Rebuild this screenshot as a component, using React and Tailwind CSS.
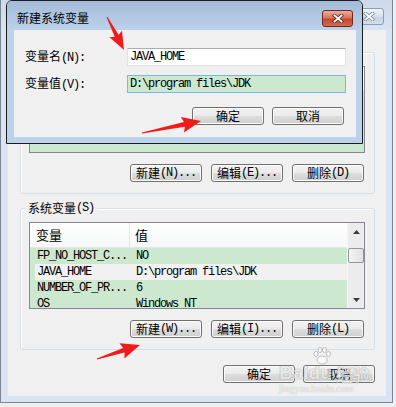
import React from "react";

const cjk = "font-['Noto_Sans_CJK_SC',sans-serif]";
const mono = "font-['Liberation_Mono','Noto_Sans_CJK_SC',monospace] tracking-[-1.2px]";

const sysVars = [
  { name: "FP_NO_HOST_C...", value: "NO" },
  { name: "JAVA_HOME", value: "D:\\program files\\JDK", selected: true },
  { name: "NUMBER_OF_PR...", value: "6" },
  { name: "OS", value: "Windows_NT" },
];

// rows of the user list sit under the front dialog; only the green shows
const userVars = [
  { name: "", value: "" },
  { name: " ", value: "" },
];

const M = ({ children }) => <span className={mono}>{children}</span>;

function Btn({ children }) {
  return (
    <div
      className={`h-[18px] w-[72px] shrink-0 rounded-[3px] border border-[#707070] bg-[linear-gradient(#f3f3f3_0%,#ebebeb_48%,#dddddd_52%,#cfcfcf_100%)] shadow-[inset_0_0_0_1px_#fbfbfb] flex items-center justify-center text-[12px] leading-none text-black ${cjk}`}
    >
      {children}
    </div>
  );
}

function XGlyph({ outline }) {
  return (
    <svg width="12" height="9" viewBox="0 0 12 9">
      <path d="M2.5 1.5 L9.5 7.5 M9.5 1.5 L2.5 7.5" stroke={outline} strokeWidth="3.6" strokeLinecap="square" />
      <path d="M2.5 1.5 L9.5 7.5 M9.5 1.5 L2.5 7.5" stroke="#ffffff" strokeWidth="1.9" strokeLinecap="square" />
    </svg>
  );
}

// red annotation arrow: thin tail widening toward a triangular head
function arrowPts(tx, ty, px, py, head, hw, sw) {
  const dx = px - tx;
  const dy = py - ty;
  const len = Math.hypot(dx, dy);
  const ux = dx / len;
  const uy = dy / len;
  const nx = -uy;
  const ny = ux;
  const bx = px - ux * head;
  const by = py - uy * head;
  const p = (x, y) => `${x.toFixed(1)},${y.toFixed(1)}`;
  return [
    p(tx + nx * 0.4, ty + ny * 0.4),
    p(bx + nx * sw, by + ny * sw),
    p(bx - ux * 2 + nx * hw, by - uy * 2 + ny * hw),
    p(px, py),
    p(bx - ux * 2 - nx * hw, by - uy * 2 - ny * hw),
    p(bx - nx * sw, by - ny * sw),
    p(tx - nx * 0.4, ty - ny * 0.4),
  ].join(" ");
}

function VarList({ rows, scroll, header }) {
  return (
    <div className="ml-[8px] mt-[7px] flex h-[87px] w-[336px] overflow-hidden border border-[#828790] bg-[#cce8cf]">
      <div className="flex-1 flex flex-col">
        <div className={`flex h-[25px] shrink-0 border-b border-[#e5e5e5] bg-[linear-gradient(#ffffff,#f6f7f8)] text-[13px] text-black ${cjk}`}>
          <div className="w-[100px] border-r border-[#e5e5e5] pl-[6px] flex items-center">{header && "变量"}</div>
          <div className="flex-1 pl-[5px] flex items-center">{header && "值"}</div>
        </div>
        {rows.map((r) => (
          <div
            key={r.name}
            className={`ml-[5px] flex h-[16px] shrink-0 items-center text-[12px] text-black ${r.selected ? "bg-[#f1f1f1]" : ""}`}
          >
            <div className={`w-[95px] pl-[2px] whitespace-nowrap ${mono}`}>{r.name}</div>
            <div className={`pl-[6px] whitespace-nowrap ${mono}`}>{r.value}</div>
          </div>
        ))}
      </div>
      {scroll && (
        <div className="w-[17px] shrink-0 flex flex-col bg-[#ececec] border-l border-[#f7f7f7]">
          <div className="h-[17px] flex items-center justify-center">
            <svg width="7" height="4" viewBox="0 0 7 4">
              <polygon points="3.5,0 7,4 0,4" fill="#3c3c3c" />
            </svg>
          </div>
          <div className="mt-[8px] h-[15px] w-[16px] rounded-[2px] border border-[#979797] bg-[linear-gradient(90deg,#f4f4f4,#e2e2e2)]" />
          <div className="mt-auto h-[17px] flex items-center justify-center">
            <svg width="7" height="4" viewBox="0 0 7 4">
              <polygon points="0,0 7,0 3.5,4" fill="#3c3c3c" />
            </svg>
          </div>
        </div>
      )}
    </div>
  );
}

function Group({ label, rows, scroll, header, buttons, className }) {
  return (
    <div className={`ml-[12px] w-[355px] h-[142px] flex flex-col rounded-[3px] border border-[#d5dfe5] shadow-[inset_1px_1px_0_#ffffff] ${className}`}>
      <div className={`-mt-[8px] ml-[4px] self-start bg-[#f0f0f0] px-[3px] h-[14px] flex items-center text-[12px] leading-none text-black ${cjk}`}>
        {label}
      </div>
      <VarList rows={rows} scroll={scroll} header={header} />
      <div className="mt-[11px] flex justify-end gap-[9px] pr-[10px]">
        {buttons}
      </div>
    </div>
  );
}

export default function App() {
  return (
    <div className="relative w-[396px] h-[407px] overflow-hidden bg-[#efefef]">
      {/* background window (environment variables) */}
      <div className="w-[393px] h-[403px] flex flex-col border-x border-b border-[#7c8695] bg-[#d8e4f2]">
        <div className="h-[30px] shrink-0 flex items-start justify-end bg-[linear-gradient(#cbd9ea,#d8e4f2)] pr-[8px]">
          <div className="mt-[8px] h-[17px] w-[30px] rounded-[3px] border border-[#8d9db3] bg-[linear-gradient(#eef3f9,#d6e0ec_50%,#c6d3e3_52%,#d3deea)] flex items-center justify-center">
            <XGlyph outline="#7b8ba1" />
          </div>
        </div>
        <div className="flex-1 flex flex-col pl-[7px] pr-[6px] pb-[6px]">
          <div className="flex-1 flex flex-col bg-[#f0f0f0]">
            <Group
              className="mt-[22px]"
              label={null}
              rows={userVars}
              buttons={
                <>
                  <Btn>新建<M>(N)...</M></Btn>
                  <Btn>编辑<M>(E)...</M></Btn>
                  <Btn>删除<M>(D)</M></Btn>
                </>
              }
            />
            <Group
              className="mt-[14px]"
              label={<>系统变量<M>(S)</M></>}
              rows={sysVars}
              scroll
              header
              buttons={
                <>
                  <Btn>新建<M>(W)...</M></Btn>
                  <Btn>编辑<M>(I)...</M></Btn>
                  <Btn>删除<M>(L)</M></Btn>
                </>
              }
            />
            <div className="mt-[15px] flex justify-end gap-[8px] pr-[11px]">
              <Btn>确定</Btn>
              <Btn>取消</Btn>
            </div>
          </div>
        </div>
      </div>

      {/* front dialog: 新建系统变量 */}
      <div className="absolute left-[6px] top-0 w-[357px] h-[144px] flex flex-col rounded-t-[6px] border border-[#1c1c1c] bg-[#bcd1ea]">
        <div className="h-[29px] shrink-0 flex items-start justify-between rounded-t-[5px] bg-[linear-gradient(#a3bbd8,#b3c9e3_60%,#bcd1ea)] pl-[10px] pr-[9px]">
          <span className={`mt-[11px] text-[12px] leading-none text-black ${cjk}`}>新建系统变量</span>
          <div className="mt-[9px] h-[17px] w-[31px] rounded-[3px] border border-[#6b2a21] bg-[linear-gradient(#eaae9f,#d9765f_45%,#c7472d_55%,#d56a4e)] flex items-center justify-center">
            <XGlyph outline="#5b2a22" />
          </div>
        </div>
        <div className="flex-1 flex flex-col pl-[7px] pr-[6px] pb-[6px]">
          <div className="flex-1 flex flex-col bg-[#f0f0f0] pl-[11px] pr-[10px]">
            <div className="mt-[18px] flex h-[18px] items-center">
              <div className={`w-[102px] text-[12px] leading-none text-black ${cjk}`}>
                变量名<M>(N):</M>
              </div>
              <div className="h-[18px] w-[219px] border border-[#e2e3ea] border-t-[#abadb3] bg-white pl-[2px] flex items-center">
                <span className={`text-[12px] leading-none text-black ${mono}`}>JAVA_HOME</span>
              </div>
            </div>
            <div className="mt-[9px] flex h-[18px] items-center">
              <div className={`w-[102px] text-[12px] leading-none text-black ${cjk}`}>
                变量值<M>(V):</M>
              </div>
              <div className="h-[18px] w-[219px] border border-[#7eb4ea] bg-[#cce8cf] pl-[2px] flex items-center">
                <span className={`text-[12px] leading-none text-black ${mono}`}>D:\program files\JDK</span>
              </div>
            </div>
            <div className="mt-[14px] flex justify-end gap-[8px] pr-[2px]">
              <Btn>确定</Btn>
              <Btn>取消</Btn>
            </div>
          </div>
        </div>
      </div>

      {/* watermark */}
      <div className="absolute left-[279px] top-[352px] pointer-events-none select-none opacity-75">
        <div className="flex items-end h-[30px] font-['Liberation_Sans',sans-serif] font-bold text-[19px] leading-none text-white/80 [text-shadow:0_0_1px_#8a8a8a,0_0_1px_#8a8a8a]">
          <span>Bai</span>
          <span className="relative">
            <svg className="absolute left-[3px] -top-[16px]" width="20" height="18" viewBox="0 0 20 18">
              <g fill="#ffffff" fillOpacity="0.8" stroke="#9a9a9a" strokeWidth="0.8">
                <ellipse cx="4" cy="7" rx="2" ry="2.6" />
                <ellipse cx="8" cy="3" rx="2" ry="2.6" />
                <ellipse cx="12.5" cy="3" rx="2" ry="2.6" />
                <ellipse cx="16.5" cy="7" rx="2" ry="2.6" />
                <ellipse cx="10.2" cy="13" rx="5" ry="4" />
              </g>
            </svg>
            du
          </span>
          <span className={`ml-[4px] text-[17px] ${cjk}`}>经验</span>
        </div>
        <div className="mt-[2px] font-['Liberation_Serif',serif] text-[10px] leading-none text-white/80 [text-shadow:0_0_1px_#8a8a8a]">
          jingyan.baidu.com
        </div>
      </div>

      {/* red annotation arrows */}
      <svg className="absolute inset-0 pointer-events-none" width="396" height="407" viewBox="0 0 396 407">
        <g fill="#f01c1c">
          <polygon points={arrowPts(107, 17, 124, 50, 16, 7, 2.2)} />
          <polygon points={arrowPts(142, 133, 201, 121, 17, 8, 2.4)} />
          <polygon points={arrowPts(97, 359, 140, 345, 17, 8, 2.4)} />
        </g>
      </svg>
    </div>
  );
}
